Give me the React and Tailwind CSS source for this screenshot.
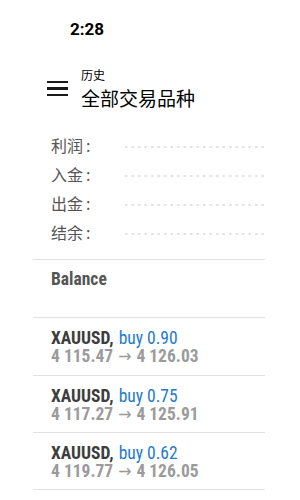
import React from 'react';

const cjk = { fontFamily: '"Noto Sans CJK SC", "Noto Sans", sans-serif' };
const narrow = { fontFamily: '"Liberation Sans Narrow", "Roboto Condensed", "DejaVu Sans Condensed", Roboto, sans-serif' };

const stats = ['利润', '入金', '出金', '结余'];

const trades = [
    { lots: '0.90', open: '4 115.47', close: '4 126.03' },
    { lots: '0.75', open: '4 117.27', close: '4 125.91' },
    { lots: '0.62', open: '4 119.77', close: '4 126.05' },
];

export default function App() {
    return (
        <div className="w-[300px] h-[500px] bg-white overflow-hidden">
            {/* status bar */}
            <div className="pt-[19px] pl-[70px] h-[41px]">
                <span className="block text-[17px] leading-[20px] font-bold text-black" style={{ fontFamily: 'Roboto, sans-serif' }}>2:28</span>
            </div>

            {/* toolbar */}
            <div className="mt-[27px] flex items-center pl-[47px]">
                <div className="flex flex-col gap-[4px] w-[21px]">
                    <span className="block h-[2.5px] bg-[#1a1a1a]" />
                    <span className="block h-[2.5px] bg-[#1a1a1a]" />
                    <span className="block h-[2.5px] bg-[#1a1a1a]" />
                </div>
                <div className="ml-[13px] flex flex-col text-black" style={cjk}>
                    <span className="text-[12px] leading-[14px]">历史</span>
                    <span className="mt-[5px] text-[19px] leading-[22px]">全部交易品种</span>
                </div>
            </div>

            {/* summary */}
            <div className="mt-[21px] ml-[33px] w-[232px]">
                <div className="pl-[18px]">
                    {stats.map((label) => (
                        <div key={label} className="h-[29px] flex items-center">
                            <span className="w-[72px] text-[16px] leading-[20px] text-[#555]" style={cjk}>
                                {label}<span className="ml-[3px]">:</span>
                            </span>
                            <span className="flex-1 h-[4px] mt-[4px] bg-[radial-gradient(circle,#dcdcdc_0.9px,transparent_1.3px)] bg-[length:6.5px_4px] bg-repeat-x" />
                        </div>
                    ))}
                </div>

                <div className="mt-[13px] border-t border-[#e2e2e2] h-[58px] pt-[10px] pl-[18px]">
                    <span className="block text-[17.5px] leading-[18px] font-bold text-[#555]" style={narrow}>Balance</span>
                </div>

                {trades.map((t, i) => (
                    <div
                        key={i}
                        className={`border-t border-[#e2e2e2] ${i === 0 ? 'h-[58px]' : 'h-[57px]'} pt-[11px] pl-[18px] text-[17.5px] leading-[18px] font-bold`}
                        style={narrow}
                    >
                        <div className="flex gap-[5px]">
                            <span className="text-[#3d3d3d]">XAUUSD,</span>
                            <span className="font-normal text-[#1f7bcc]">buy {t.lots}</span>
                        </div>
                        <div className="flex gap-[5px] text-[#9b9b9b]">
                            <span>{t.open}</span>
                            <span className="font-normal">→</span>
                            <span>{t.close}</span>
                        </div>
                    </div>
                ))}
                <div className="border-t border-[#e2e2e2]" />
            </div>
        </div>
    );
}
